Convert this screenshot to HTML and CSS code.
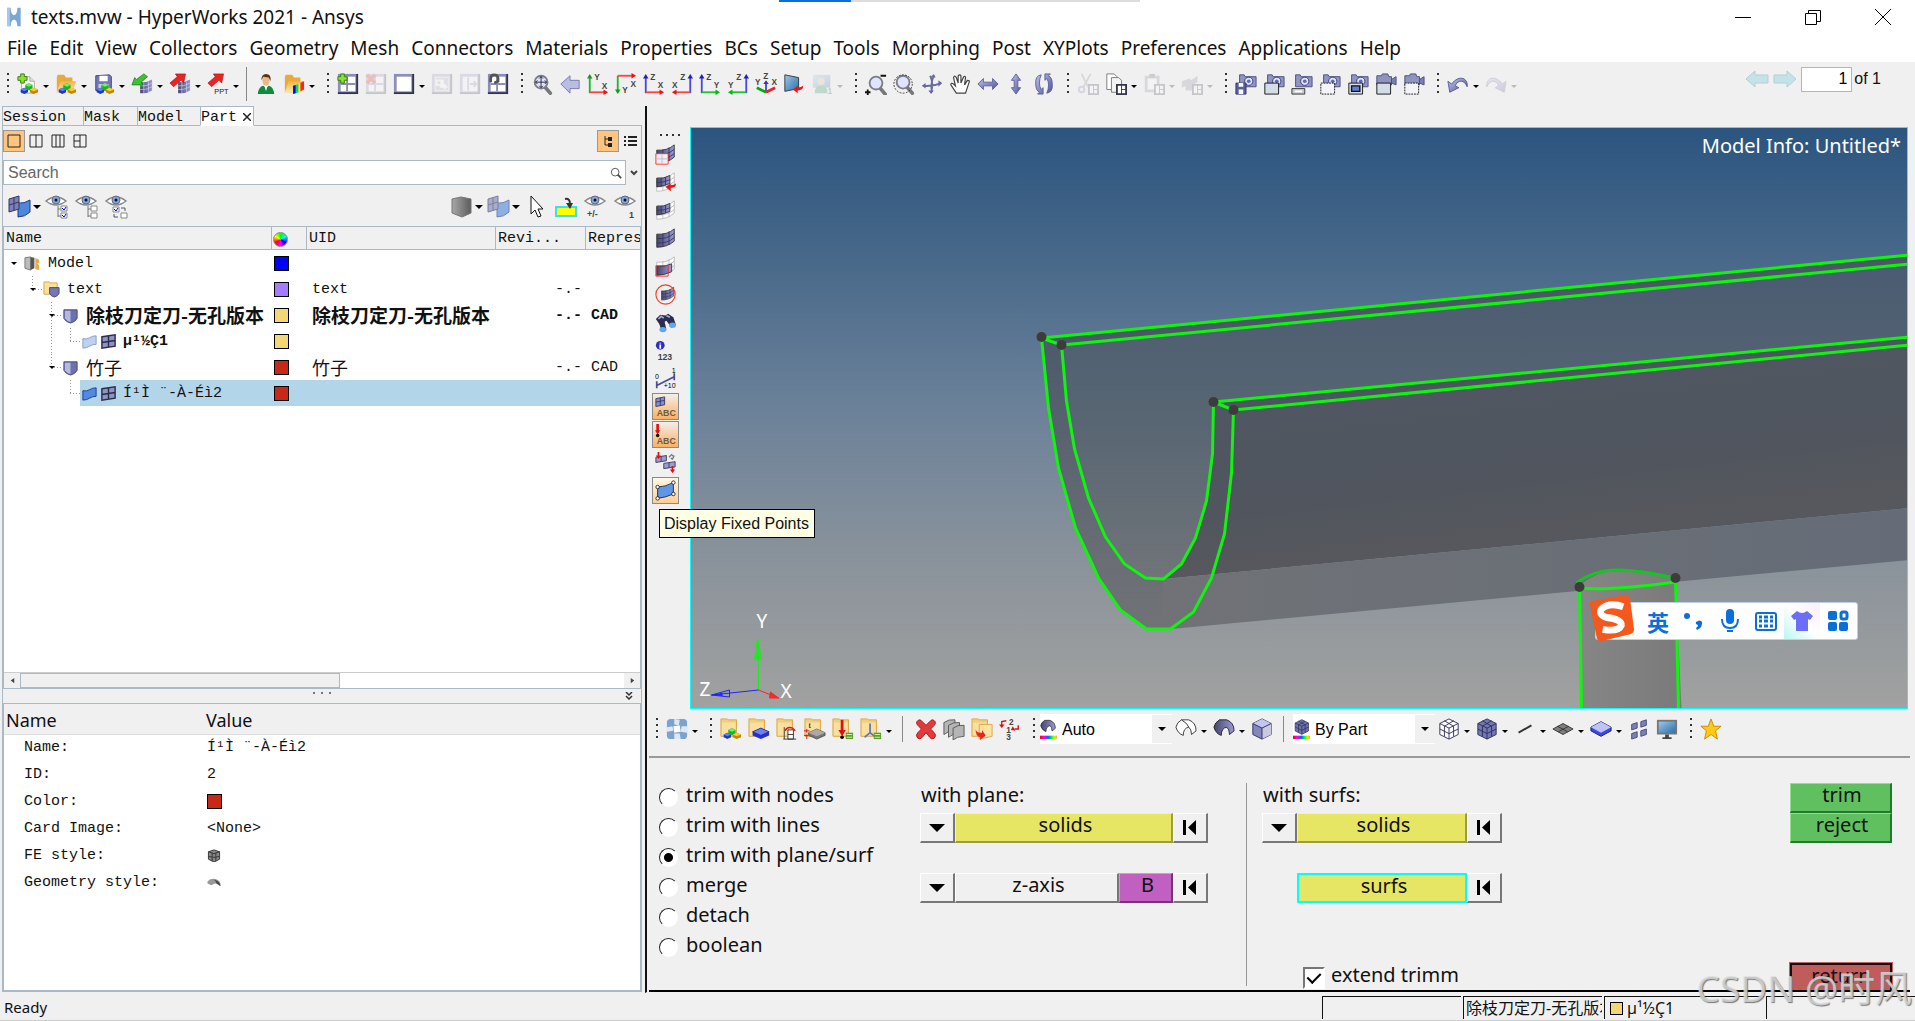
FILE: index.html
```html
<!DOCTYPE html>
<html lang="en">
<head>
    <meta charset="UTF-8">
    <meta name="viewport" content="width=device-width, initial-scale=1.0">
    <title>texts.mvw - HyperWorks 2021 - Ansys</title>
    <link rel="stylesheet" href="styles.css">
</head>
<body>
    <!-- Icon sprite -->
    <svg class="sprite" aria-hidden="true">
        <defs>
            <linearGradient id="blue" x1="0" y1="0" x2="1" y2="1"><stop offset="0" stop-color="#c3c6ee"/><stop offset="1" stop-color="#4d5196"/></linearGradient>
            <linearGradient id="mesh" x1="0" y1="0" x2="1" y2="0"><stop offset="0" stop-color="#45456f"/><stop offset="1" stop-color="#9a9ad6"/></linearGradient>
            <linearGradient id="gold" x1="0" y1="0" x2="0" y2="1"><stop offset="0" stop-color="#f0b548"/><stop offset="1" stop-color="#fbe6a4"/></linearGradient>
            <linearGradient id="grey" x1="0" y1="0" x2="1" y2="0"><stop offset="0" stop-color="#a8a8a8"/><stop offset="1" stop-color="#5c5c5c"/></linearGradient>
            <linearGradient id="rainbow" x1="0" y1="0" x2="1" y2="0"><stop offset="0" stop-color="#f00"/><stop offset=".25" stop-color="#f0f"/><stop offset=".5" stop-color="#06f"/><stop offset=".7" stop-color="#0f3"/><stop offset=".9" stop-color="#fe0"/><stop offset="1" stop-color="#f70"/></linearGradient>
            <linearGradient id="screen" x1="0" y1="0" x2="1" y2="1"><stop offset="0" stop-color="#9cc7ea"/><stop offset="1" stop-color="#2f6fa8"/></linearGradient>

            <symbol id="blocks" viewBox="0 0 24 24">
                <path d="M13 11l4 2v4l-4 2-4-2v-4z" fill="#1eb41e"/><path d="M13 11l4 2-4 2-4-2z" fill="#7de86a"/>
                <path d="M8 16l4 2v3l-4 2-4-2v-3z" fill="#1d37c4"/><path d="M8 16l4 2-4 2-4-2z" fill="#5a80ff"/>
                <path d="M18 16l5 2v3l-5 2-4-2v-3z" fill="#c98500"/><path d="M18 16l5 2-5 2-4-2z" fill="#ffc93c"/>
            </symbol>
            <symbol id="plus" viewBox="0 0 24 24"><path d="M4 1h4v3h3v4H8v3H4V8H1V4h3z" fill="#8ee02c" stroke="#2f7d12"/></symbol>
            <symbol id="folder" viewBox="0 0 24 24"><path d="M2 4l1-2h7l2 3h7v16H2z" fill="#e9a93b"/><path d="M2 21l4-12h17l-4 12z" fill="url(#gold)"/></symbol>
            <symbol id="cfolder" viewBox="0 0 24 24"><path d="M1 5V1h7l1 1h9v18H1z" fill="#f1cf7c" stroke="#dca640"/><path d="M2 5h15v14H2z" fill="#f9dfa0"/></symbol>
            <symbol id="new" viewBox="0 0 24 24"><path d="M5 4h9l5 5v13H5z" fill="#fff" stroke="#aaa"/><path d="M14 4v5h5" fill="#ddd" stroke="#aaa"/><use href="#plus"/><use href="#blocks"/></symbol>
            <symbol id="open" viewBox="0 0 24 24"><use href="#folder"/><use href="#blocks"/></symbol>
            <symbol id="disk" viewBox="0 0 24 24"><path d="M3 3l15-1 2 2v15H3z" fill="#7479b6" stroke="#3d4180"/><path d="M7 3h9v6H7z" fill="#fff"/><path d="M6 12h11v7H6z" fill="#c9cbe8"/></symbol>
            <symbol id="save" viewBox="0 0 24 24"><use href="#disk"/><use href="#blocks"/></symbol>
            <symbol id="smallmesh" viewBox="0 0 24 24"><path d="M10 10q6 1 13-3v12q-6 4-13 3z" fill="url(#mesh)"/><path d="M10 14q6 1 13-3M10 18q6 1 13-3M14 10v12M19 9v12" fill="none" stroke="#d5d5ef" stroke-width=".7"/></symbol>
            <symbol id="import" viewBox="0 0 24 24"><use href="#smallmesh"/><path d="M14 1l4 3-7 6 2 3-12 0 3-8 2 2z" fill="#3cc331" stroke="#1c7a16" stroke-width=".8"/></symbol>
            <symbol id="redup" viewBox="0 0 24 24"><path d="M1 11l8-7-2-3 11 0-2 10-3-3-8 7z" fill="#e82525" stroke="#a81212" stroke-width=".7"/></symbol>
            <symbol id="export" viewBox="0 0 24 24"><use href="#smallmesh"/><use href="#redup"/></symbol>
            <symbol id="ppt" viewBox="0 0 24 24"><use href="#redup"/><text x="8" y="23" font-size="8" font-family="Liberation Sans" fill="#222">PPT</text></symbol>
            <symbol id="user" viewBox="0 0 24 24"><path d="M3 23q1-8 6-9l3 2 3-2q5 1 6 9z" fill="#118a3c"/><path d="M10 13h4l-2 7z" fill="#fff"/><ellipse cx="12" cy="8" rx="4" ry="6" fill="#e9b98c"/><path d="M7 8q0-7 5-7 6 0 5 8l-2-4-6-1z" fill="#5b3211"/></symbol>
            <symbol id="results" viewBox="0 0 24 24"><use href="#folder"/><path d="M11 14l3-1v9l-3 1z" fill="#00f"/><path d="M14 13l3-1v9l-3 1z" fill="#0d6"/><path d="M17 12l2-1v9l-2 1z" fill="#fe0"/><path d="M19 11l4-2v9l-4 2z" fill="#f22"/></symbol>
            <symbol id="page" viewBox="0 0 24 24"><path d="M1 1h22v22H1z" fill="#8b8eb8"/><path d="M22 1v21H1" fill="none" stroke="#33354f" stroke-width="2"/><path d="M4 4h16v16H4z" fill="#fff"/></symbol>
            <symbol id="grid" viewBox="0 0 24 24"><use href="#page"/><path d="M11 4v16M4 12h16" stroke="#8b8eb8" stroke-width="2"/></symbol>
            <symbol id="addpage" viewBox="0 0 24 24"><use href="#grid"/><use href="#plus"/></symbol>
            <symbol id="delpage" viewBox="0 0 24 24"><use href="#grid"/><path d="M2 2l9 9M11 2l-9 9" stroke="#d11" stroke-width="4"/></symbol>
            <symbol id="swap" viewBox="0 0 24 24"><use href="#page"/><path d="M5 5h14v14H5z" fill="#aab"/><path d="M6 8h5v5H6zM13 7v8M10 15h8M15 12v6" fill="none" stroke="#fff" stroke-width="2"/></symbol>
            <symbol id="expand" viewBox="0 0 24 24"><use href="#page"/><path d="M10 5v14M12 12h7M16 9l3 3-3 3" fill="none" stroke="#8b8eb8" stroke-width="2"/></symbol>
            <symbol id="syncpage" viewBox="0 0 24 24"><use href="#grid"/><path d="M4 10V6q0-4 4-4 5 0 4 7l-4 2" fill="none" stroke="#555" stroke-width="3"/></symbol>
            <symbol id="lens" viewBox="0 0 24 24"><path d="M15 15l6 7" stroke="#777" stroke-width="4" stroke-linecap="round"/><circle cx="11" cy="10" r="7" fill="#dfe4ff" stroke="#7c7c84" stroke-width="2"/></symbol>
            <symbol id="fit" viewBox="0 0 24 24"><use href="#lens"/><path d="M11 4v12M5 10h12M9 6l2-2 2 2M9 14l2 2 2-2M7 8l-2 2 2 2M15 8l2 2-2 2" fill="none" stroke="#223"/></symbol>
            <symbol id="back" viewBox="0 0 24 24"><path d="M2 12l10-9v5h10v9H12v5z" fill="#b9bde4" stroke="#7478ab"/></symbol>
            <symbol id="xy" viewBox="0 0 24 24"><path d="M3 4v18" stroke="#1fb52c" stroke-width="2"/><path d="M0 6l3-5 3 5z" fill="#159a22"/><path d="M3 21h17" stroke="#f44" stroke-width="2"/><path d="M18 18l5 3-5 3z" fill="#e11"/><text x="8" y="8" class="ax">Y</text><text x="16" y="17" class="ax">X</text></symbol>
            <symbol id="xy2" viewBox="0 0 24 24"><path d="M3 3v18" stroke="#1fb52c" stroke-width="2"/><path d="M0 18l3 5 3-5z" fill="#159a22"/><path d="M3 3h17" stroke="#f44" stroke-width="2"/><path d="M18 0l5 3-5 3z" fill="#e11"/><text x="8" y="22" class="ax">Y</text><text x="17" y="15" class="ax">X</text></symbol>
            <symbol id="zx" viewBox="0 0 24 24"><path d="M3 4v18" stroke="#4a4ad8" stroke-width="2"/><path d="M0 6l3-5 3 5z" fill="#22b"/><path d="M3 21h17" stroke="#f44" stroke-width="2"/><path d="M18 18l5 3-5 3z" fill="#e11"/><text x="8" y="8" class="ax">Z</text><text x="16" y="16" class="ax">X</text></symbol>
            <symbol id="xz" viewBox="0 0 24 24"><path d="M21 4v18" stroke="#4a4ad8" stroke-width="2"/><path d="M18 6l3-5 3 5z" fill="#22b"/><path d="M4 21h17" stroke="#f44" stroke-width="2"/><path d="M6 18l-5 3 5 3z" fill="#e11"/><text x="10" y="8" class="ax">Z</text><text x="1" y="16" class="ax">X</text></symbol>
            <symbol id="zy" viewBox="0 0 24 24"><path d="M3 4v18" stroke="#4a4ad8" stroke-width="2"/><path d="M0 6l3-5 3 5z" fill="#22b"/><path d="M3 21h17" stroke="#1fc52c" stroke-width="2"/><path d="M18 18l5 3-5 3z" fill="#0b1"/><text x="8" y="8" class="ax">Z</text><text x="16" y="16" class="ax">Y</text></symbol>
            <symbol id="yz" viewBox="0 0 24 24"><path d="M21 4v18" stroke="#4a4ad8" stroke-width="2"/><path d="M18 6l3-5 3 5z" fill="#22b"/><path d="M4 21h17" stroke="#1fc52c" stroke-width="2"/><path d="M6 18l-5 3 5 3z" fill="#0b1"/><text x="10" y="8" class="ax">Z</text><text x="1" y="16" class="ax">Y</text></symbol>
            <symbol id="iso" viewBox="0 0 24 24"><path d="M12 21V11" stroke="#44d" stroke-width="2"/><path d="M9 12l3-4 3 4z" fill="#33c"/><path d="M12 21l-10-5" stroke="#0a1" stroke-width="3"/><path d="M12 21l10-5" stroke="#e22" stroke-width="3"/><text x="9" y="7" class="ax">Z</text><text x="0" y="13" class="ax">Y</text><text x="18" y="13" class="ax">X</text></symbol>
            <symbol id="viewback" viewBox="0 0 24 24"><path d="M2 2l15 3v12L2 20z" fill="url(#screen)" stroke="#334"/><path d="M22 14q0 5-6 5v3l-5-4 5-4v2q4 0 6-2z" fill="#e11"/></symbol>
            <symbol id="userview" viewBox="0 0 24 24"><path d="M2 2h19v14H2z" fill="url(#screen)"/><circle cx="11" cy="9" r="4" fill="#e9b98c"/><path d="M4 22q0-8 7-8t7 8z" fill="#118a3c"/><text x="18" y="23" class="ax">1</text></symbol>
            <symbol id="zoompm" viewBox="0 0 24 24"><g transform="translate(1 1)"><use href="#lens"/></g><path d="M17 3h6M0 21h6M3 18v6" stroke="#111" stroke-width="2"/></symbol>
            <symbol id="zoomarea" viewBox="0 0 24 24"><use href="#lens"/><circle cx="11" cy="12" r="10" fill="none" stroke="#333" stroke-dasharray="2 1.5"/></symbol>
            <symbol id="rotate" viewBox="0 0 24 24"><path d="M10 3q4 9 1 18M2 14q11 1 20-3M14 3q-4 9-2 18" fill="none" stroke="#666a9c" stroke-width="2"/><path d="M19 8l4 3-4 4zM5 11l-4 3 4 3zM10 5l4-4 2 4zM8 19l3 4 3-4z" fill="#666a9c"/></symbol>
            <symbol id="hand" viewBox="0 0 24 24"><path d="M8 22l-6-9q0-3 3-1l2 2-2-9q1-3 3 0l2 6V3q2-2 3 0v8l3-7q2-1 2 1l-1 8 3-5q3 0 2 2l-4 12z" fill="#fff" stroke="#444" stroke-width="1.3"/></symbol>
            <symbol id="lr" viewBox="0 0 24 24"><path d="M1 12l6-6v4h10V6l6 6-6 6v-4H7v4z" fill="url(#blue)" stroke="#5a5f9c"/></symbol>
            <symbol id="ud" viewBox="0 0 24 24"><path d="M12 1l5 7h-3v8h3l-5 7-5-7h3V8H7z" fill="url(#blue)" stroke="#5a5f9c"/></symbol>
            <symbol id="spin" viewBox="0 0 24 24"><path d="M9 2Q2 3 3 12q0 7 4 9l-2 2h6v-7l-2 2Q7 15 7 11q0-5 2-9zM15 22q7-1 6-10 0-7-4-9l2-2h-6v7l2-2q2 3 2 7 0 5-2 9z" fill="url(#blue)" stroke="#5a5f9c"/></symbol>
            <symbol id="minipage" viewBox="0 0 24 24"><path d="M13 13h10v10H13z" fill="#fff" stroke="#33354f" stroke-width="2"/><path d="M18 13v10M18 18h5" stroke="#33354f"/></symbol>
            <symbol id="cut" viewBox="0 0 24 24"><path d="M5 1l7 14M15 1L7 15" stroke="#888" stroke-width="2"/><circle cx="5" cy="18" r="3" fill="none" stroke="#77b" stroke-width="2"/><use href="#minipage"/></symbol>
            <symbol id="copy" viewBox="0 0 24 24"><path d="M2 1h8l3 3v14H2z" fill="#fff" stroke="#777"/><path d="M7 5h8l3 3v13H7z" fill="#f3f3f3" stroke="#777"/><use href="#minipage"/></symbol>
            <symbol id="paste" viewBox="0 0 24 24"><path d="M2 3h16v18H2z" fill="#889"/><path d="M5 6h10v12H5z" fill="#fff"/><path d="M7 1h6v4H7z" fill="#556"/><use href="#minipage"/></symbol>
            <symbol id="pasteview" viewBox="0 0 24 24"><path d="M1 9l8-3 2 2 7-5v7l-7 4-2-2-8 4zM5 13l10-3v9H5z" fill="#889"/><use href="#minipage"/></symbol>
            <symbol id="camera" viewBox="0 0 24 24"><path d="M5 2h5l1 2h12v11H5z" fill="#9195c4" stroke="#484b82"/><circle cx="15" cy="9" r="4.500" fill="#dfe3ff" stroke="#33365f"/><circle cx="15" cy="9" r="2" fill="#5a6ac0"/></symbol>
            <symbol id="video" viewBox="0 0 24 24"><path d="M2 3h5l1-2h6l1 3h3v9H2z" fill="#8f93bd" stroke="#484b82"/><path d="M18 7l5-3v9l-5-2z" fill="#7b7fae" stroke="#484b82"/></symbol>
            <symbol id="box" viewBox="0 0 24 24"><path d="M2 11h15v12H2z" fill="#d3dde8" stroke="#111"/></symbol>
            <symbol id="dash" viewBox="0 0 24 24"><path d="M2 11h15v12H2z" fill="#f4f4f8" stroke="#111" stroke-dasharray="2 1"/></symbol>
            <symbol id="camsave" viewBox="0 0 24 24"><use href="#camera"/><path d="M1 11h11v12H1z" fill="#5a5f9c" stroke="#33365f"/><path d="M4 11h5v4H4zM4 18h5v5H4z" fill="#fff"/></symbol>
            <symbol id="cambox" viewBox="0 0 24 24"><use href="#camera"/><use href="#box"/></symbol>
            <symbol id="camtool" viewBox="0 0 24 24"><use href="#camera"/><path d="M1 17h14v6H1z" fill="#ccc" stroke="#333"/><path d="M4 20h8" stroke="#fff" stroke-width="2"/></symbol>
            <symbol id="camdash" viewBox="0 0 24 24"><use href="#camera"/><use href="#dash"/></symbol>
            <symbol id="camwin" viewBox="0 0 24 24"><use href="#camera"/><use href="#box"/><path d="M5 14h9v6H5z" fill="#5f7ed8" stroke="#111" stroke-width="1.500"/></symbol>
            <symbol id="vidbox" viewBox="0 0 24 24"><use href="#video"/><use href="#box"/></symbol>
            <symbol id="viddash" viewBox="0 0 24 24"><use href="#video"/><use href="#dash"/></symbol>
            <symbol id="undo" viewBox="0 0 24 24"><path d="M1 9l4 3Q11 4 18 6q5 3 4 9-3-7-8-6-4 1-5 5l4 2-10 5z" fill="url(#blue)" stroke="#565b98"/></symbol>
            <symbol id="redo" viewBox="0 0 24 24"><path d="M23 9l-4 3Q13 4 6 6q-5 3-4 9 3-7 8-6 4 1 5 5l-4 2 10 5z" fill="url(#blue)" stroke="#565b98"/></symbol>

            <symbol id="eye" viewBox="0 0 24 24"><path d="M1 6q10-8 20 0-10 8-20 0z" fill="#fff" stroke="#888" stroke-width="1.500"/><circle cx="11" cy="5" r="4" fill="#7fa9dd" stroke="#668"/><circle cx="11" cy="5" r="1.500" fill="#111"/></symbol>
            <symbol id="eyechk" viewBox="0 0 24 24"><use href="#eye"/><path d="M13 11v11M13 14h3M13 21h3" fill="none" stroke="#777"/><path d="M16 11h6v5h-6zM16 18h6v5h-6z" fill="#fff" stroke="#888"/><path d="M17 13l2 2 2-3M17 20l2 2 2-3" fill="none" stroke="#00c"/></symbol>
            <symbol id="eyeunchk" viewBox="0 0 24 24"><use href="#eye"/><path d="M13 11v11M13 14h3M13 21h3" fill="none" stroke="#777"/><path d="M16 11h6v5h-6zM16 18h6v5h-6z" fill="#fff" stroke="#888"/></symbol>
            <symbol id="eyeswap" viewBox="0 0 24 24"><use href="#eye"/><path d="M8 12h6v5H8zM16 18h6v5h-6z" fill="#fff" stroke="#888"/><path d="M9 14l2 2 2-3" fill="none" stroke="#00c"/><path d="M16 13h4v3M9 19v3h4" fill="none" stroke="#555"/></symbol>
            <symbol id="eyepm" viewBox="0 0 24 24"><use href="#eye"/><text x="3" y="22" class="ax">+/-</text></symbol>
            <symbol id="eye1" viewBox="0 0 24 24"><use href="#eye"/><text x="15" y="23" class="ax">1</text></symbol>
            <symbol id="parts" viewBox="0 0 24 24"><path d="M10 8q6 1 12-3v12q-5 5-12 5z" fill="#4d86db" stroke="#1c3f86"/><path d="M1 4l10-3v13L1 17z" fill="#7d80b8" stroke="#33365f"/><path d="M6 3v12M1 10l10-3" stroke="#33365f"/></symbol>
            <symbol id="shade" viewBox="0 0 24 24"><path d="M2 4l9-2 10 2v14l-9 4-10-4z" fill="url(#grey)" stroke="#777"/></symbol>
            <symbol id="cursor" viewBox="0 0 24 24"><path d="M7 1v18l4-4 3 7 3-1-3-7h5z" fill="#fff" stroke="#111"/></symbol>
            <symbol id="highlight" viewBox="0 0 24 24"><path d="M2 12h20v9H2z" fill="#ff0" stroke="#3fdcf2" stroke-width="2"/><path d="M11 4q5-1 5 5" fill="none" stroke="#333" stroke-width="2"/><path d="M12 8h7l-3 6z" fill="#333"/></symbol>
            <symbol id="solid" viewBox="0 0 18 18"><path d="M2 3h14v9q-2 4-7 5-5-1-7-5z" fill="#6d71ad" stroke="#444879"/><path d="M3 4h6v12q-4-1-6-4z" fill="#b5b8e2"/></symbol>
            <symbol id="modelic" viewBox="0 0 18 18"><path d="M1 3l6-1v14l-6-2z" fill="#bbb" stroke="#777"/><path d="M7 2l4 1v11l-4 2z" fill="#555"/><path d="M12 3l4 2v3l-2 1 2 2v5l-4-1z" fill="#eaa83e"/></symbol>
            <symbol id="asm" viewBox="0 0 18 18"><path d="M1 3V1h6l1 1h7v12H1z" fill="#f9dfa0" stroke="#dca640"/><path d="M7 7h10v6q-1 3-5 4-4-1-5-4z" fill="#7377b3" stroke="#444879"/></symbol>
            <symbol id="surf" viewBox="0 0 18 18"><path d="M2 6q4 1 7-1t7-2v9q-4 0-7 2t-7 2z" fill="#4f8ae6" stroke="#1c3f86"/></symbol>
            <symbol id="surfoff" viewBox="0 0 18 18"><path d="M2 6q4 1 7-1t7-2v9q-4 0-7 2t-7 2z" fill="#bcd2f2" stroke="#8a9dc0"/></symbol>
            <symbol id="mesh4" viewBox="0 0 18 18"><path d="M2 4l14-2v12L2 16zM9 3v12M2 10l14-2" fill="#8f92c8" stroke="#2a2c45" stroke-width="1.500"/></symbol>

            <symbol id="m-full" viewBox="0 0 24 24"><path d="M2 7q12 1 20-6v14q-8 7-20 7z" fill="url(#mesh)" stroke="#333"/><path d="M2 12q12 1 20-6M2 17q12 1 20-6M9 6v15M16 4v15" fill="none" stroke="#33355c"/></symbol>
            <symbol id="m-wire" viewBox="0 0 24 24"><path d="M2 7q12 1 20-6v14q-8 7-20 7zM2 12q12 1 20-6M2 17q12 1 20-6M9 6v15M16 4v15" fill="#fff" stroke="#aaa" stroke-width=".8"/></symbol>
            <symbol id="m-part" viewBox="0 0 24 24"><use href="#m-wire"/><path d="M2 7q8 1 15-3v9q-6 3-15 4z" fill="url(#mesh)" stroke="#333"/><path d="M2 12q8 0 15-3M7 7v10M12 6v9" fill="none" stroke="#33355c"/></symbol>
            <symbol id="v1" viewBox="0 0 24 24"><use href="#m-full"/><path d="M1 11h14v12H1z" fill="#fff" fill-opacity=".9" stroke="#f22"/><path d="M2 17h12M8 12v11" stroke="#bbb"/></symbol>
            <symbol id="v2" viewBox="0 0 24 24"><use href="#m-part"/><path d="M24 13q0 5-6 5v4l-6-5 6-4v2q4 0 6-2z" fill="#e11"/></symbol>
            <symbol id="v5" viewBox="0 0 24 24"><use href="#m-wire"/><path d="M2 12q8 1 17-3v9q-9 4-17 4z" fill="url(#mesh)" stroke="#333"/><path d="M1 11h14v12H1z" fill="none" stroke="#f22"/></symbol>
            <symbol id="v6" viewBox="0 0 24 24"><g transform="translate(6 3) scale(.7)"><use href="#m-full"/></g><circle cx="12" cy="12" r="11" fill="none" stroke="#f43a2a" stroke-width="1.300"/></symbol>
            <symbol id="binoc" viewBox="0 0 24 24"><path d="M1 8l5-5 6 1 3-2 6 4 3 9-5 3-6-8-2 1 2 9-5 3-3-9z" fill="#2b2d50"/><path d="M4 8l3-3 3 2M13 4l4 2" stroke="#a7a9da" stroke-width="2" fill="none"/><ellipse cx="9" cy="20" rx="4" ry="3" fill="#5aa9f2"/><ellipse cx="20" cy="15" rx="4" ry="3" fill="#5aa9f2"/></symbol>
            <symbol id="info" viewBox="0 0 24 24"><circle cx="6" cy="6" r="5" fill="#2a2fc0"/><path d="M6 3v1M6 5v5" stroke="#fff" stroke-width="2"/><text x="3" y="23" font-size="10" font-weight="bold" font-family="Liberation Sans" fill="#444">123</text></symbol>
            <symbol id="dist" viewBox="0 0 24 24"><path d="M2 15v8M22 6v8M2 20l20-10" stroke="#4a4d90" stroke-width="2"/><text x="0" y="13" font-size="8" font-family="Liberation Sans">0</text><text x="19" y="6" font-size="8" font-family="Liberation Sans">1</text><text x="10" y="23" font-size="8" font-family="Liberation Sans">+10'</text></symbol>
            <symbol id="abc1" viewBox="0 0 24 24"><path d="M1 3l10-2v9l-10 2zM6 2v9M1 7l10-2" fill="#8a8dd0" stroke="#33365f"/><text x="2" y="23" class="abc">ABC</text></symbol>
            <symbol id="abc2" viewBox="0 0 24 24"><path d="M3 0v9" stroke="#e01010" stroke-width="3"/><path d="M0 7h6l-3 5z" fill="#e01010"/><circle cx="3" cy="13" r="2" fill="#111"/><text x="2" y="23" class="abc">ABC</text></symbol>
            <symbol id="norm" viewBox="0 0 24 24"><path d="M1 6l12-2v6L1 12zM10 13l13-2v6l-13 2zM7 5v6M16 12v6" fill="#9a9dd0" stroke="#33365f"/><path d="M4 0v6M20 16v6" stroke="#e01010" stroke-width="2"/><path d="M1 4h6L4 8zM17 20h6l-3 4z" fill="#e01010"/><path d="M16 6l3-3 2 2M22 4l-2 4-2-1" fill="none" stroke="#777" stroke-width="1.500"/></symbol>
            <symbol id="fixed" viewBox="0 0 24 24"><path d="M3 8q8 0 18-5v13q-9 4-18 5z" fill="#5e96ea" stroke="#223"/><g fill="#fff" stroke="#223"><circle cx="3" cy="8" r="2"/><circle cx="21" cy="3" r="2"/><circle cx="21" cy="16" r="2"/><circle cx="3" cy="21" r="2"/></g></symbol>

            <symbol id="panelset" viewBox="0 0 24 24"><rect x="1" y="1" width="22" height="22" rx="4" fill="#7ba3cb"/><path d="M1 10l6-1 1 5-7 1zM9 1l6 1-1 6-5-1zM23 9l-6 0-1 6 7 1zM9 17l6 0 1 6H9z" fill="#dce8f5"/><path d="M8 9l7-1 1 7-7 1z" fill="#fff"/></symbol>
            <symbol id="slab" viewBox="0 0 24 24"><path d="M14 11l9 4v4l-9 4-9-4v-4z" fill="#2730cf"/><path d="M14 11l9 4-9 4-9-4z" fill="#6f7dff" stroke="#111a77" stroke-width=".7"/></symbol>
            <symbol id="fcomp" viewBox="0 0 24 24"><use href="#cfolder"/><use href="#blocks"/></symbol>
            <symbol id="fmat" viewBox="0 0 24 24"><use href="#cfolder"/><use href="#slab"/></symbol>
            <symbol id="ftab" viewBox="0 0 24 24"><use href="#cfolder"/><path d="M9 10v13M8 23h14M13 13h6v10h-6zM13 18h6" fill="#fff" stroke="#333"/><path d="M10 14q2-5 8-3l3 3" fill="none" stroke="#e11" stroke-width="1.500"/></symbol>
            <symbol id="fprop" viewBox="0 0 24 24"><use href="#cfolder"/><path d="M14 12l9 4v3l-9 4-9-4v-3z" fill="#777" stroke="#333" stroke-width=".7"/><path d="M14 12l9 4-9 4-9-4z" fill="#aaa"/><text x="5" y="11" font-size="10" font-family="Liberation Serif">t</text><path d="M3 12v4M3 18v5M0 14h6M0 19h5" stroke="#c11"/></symbol>
            <symbol id="fload" viewBox="0 0 24 24"><use href="#cfolder"/><path d="M11 2v14" stroke="#e01010" stroke-width="3"/><path d="M7 13h8l-4 7z" fill="#e01010"/><circle cx="11" cy="21" r="2"/><path d="M15 16h8v7h-8z" fill="#5aa02c"/><path d="M16 18h6M16 21h6" stroke="#d9f5c0"/></symbol>
            <symbol id="fsys" viewBox="0 0 24 24"><use href="#cfolder"/><path d="M11 6v10l-6 5M11 16l5 4" fill="none" stroke="#667bb8" stroke-width="2"/><path d="M15 16h8v7h-8z" fill="#5aa02c"/><path d="M16 18h6M16 21h6" stroke="#d9f5c0"/></symbol>
            <symbol id="delete" viewBox="0 0 24 24"><path d="M2 4q3-4 6 0l4 4 4-4q3-4 6 0 1 2-1 4l-4 4 4 4q3 3 0 6-3 2-5-1l-4-5-4 5q-3 3-5 1-3-3 0-6l4-4-4-4q-2-2-1-4z" fill="#e43a3a" stroke="#a01818"/></symbol>
            <symbol id="layers" viewBox="0 0 24 24"><g fill="#b5b5b5" stroke="#555"><path d="M1 5q5-4 12-3v12q-8 0-12 4z"/><path d="M6 8q5-4 12-3v12q-8 0-12 4z"/><path d="M11 11q5-4 12-3v12q-8 0-12 4z"/></g></symbol>
            <symbol id="move" viewBox="0 0 24 24"><use href="#cfolder"/><path d="M9 7h14v13L9 23z" fill="#fbe3a2" stroke="#dca640"/><path d="M5 12q1 5 7 4v-3l4 6-6 5v-3q-5-1-5-9z" fill="#e22"/></symbol>
            <symbol id="renum" viewBox="0 0 24 24"><text x="11" y="8" class="ax">2</text><text x="8" y="16" class="ax">1</text><text x="8" y="24" class="ax">3</text><path d="M8 3L3 4v4M17 12h4V8" fill="none" stroke="#d11" stroke-width="1.500"/><path d="M0 7h6l-3 4zM15 9l-2 4 5 1z" fill="#d11"/></symbol>
            <symbol id="sheet" viewBox="0 0 24 24"><path d="M1 10q1-5 6-8h8q8 3 8 12l-5 4q0-6-3-8-6 1-6 9-6-2-8-9zM15 10q-1-4-8-8" fill="#fff" stroke="#333"/></symbol>
            <symbol id="sheetfill" viewBox="0 0 24 24"><path d="M1 10q1-5 6-8h8q8 3 8 12l-5 4q0-6-3-8-6 1-6 9-6-2-8-9z" fill="url(#mesh)" stroke="#222"/></symbol>
            <symbol id="cube" viewBox="0 0 24 24"><path d="M12 1l10 5v12l-10 5-10-5V6z" fill="#8487bd" stroke="#2c2e55"/><path d="M12 1l10 5-10 5L2 6z" fill="#c3c6f3"/><path d="M12 23V11l10-5v12z" fill="#c9cadf"/><path d="M12 11v12M2 6l10 5 10-5" fill="none" stroke="#2c2e55"/></symbol>
            <symbol id="cubegrid" viewBox="0 0 24 24"><path d="M12 1l10 5v12l-10 5-10-5V6z" stroke="#2c2e55"/><path d="M12 11v12M2 6l10 5 10-5M2 12l10 5 10-5M7 3l10 6v11M17 3L7 9v11" fill="none" stroke="#2c2e55"/></symbol>
            <symbol id="shadeby" viewBox="0 0 24 24"><g transform="scale(.8)"><use href="#sheetfill"/></g><path d="M0 20h20v4H0z" fill="url(#rainbow)"/></symbol>
            <symbol id="cubeby" viewBox="0 0 24 24"><g transform="translate(1 0) scale(.8)" fill="#6d71ad"><use href="#cubegrid"/></g><path d="M0 20h20v4H0z" fill="url(#rainbow)"/></symbol>
            <symbol id="line" viewBox="0 0 24 24"><path d="M5 16l14-8" stroke="#333" stroke-width="2"/></symbol>
            <symbol id="flat" viewBox="0 0 24 24"><path d="M12 6l11 6-11 6-11-6zM6 9l11 6M18 9L7 15" fill="#7e7e7e" stroke="#333"/></symbol>
            <symbol id="slab2" viewBox="0 0 24 24"><path d="M12 4l11 6v4l-11 6-11-6v-4z" fill="#3c49e0" stroke="#111a77"/><path d="M12 4l11 6-11 6-11-6z" fill="#bcc3ff"/></symbol>
            <symbol id="shrink" viewBox="0 0 24 24"><path d="M4 7l6-2v6l-6 2zM14 4l6-2v6l-6 2zM4 17l6-2v6l-6 2zM14 14l6-2v6l-6 2z" fill="#7b7fba" stroke="#44477c"/></symbol>
            <symbol id="monitor" viewBox="0 0 24 24"><path d="M1 2h22v16H1z" fill="#777"/><path d="M3 4h18v12H3z" fill="url(#screen)"/><path d="M10 18h4v3h3v2H7v-2h3z" fill="#444"/></symbol>
            <symbol id="star" viewBox="0 0 24 24"><path d="M12 1l3 8h8l-6 5 2 9-7-5-7 5 2-9-6-5h8z" fill="#ffc915" stroke="#c78a00"/></symbol>

            <symbol id="down" viewBox="0 0 10 6"><path d="M1 1h8L5 5z"/></symbol>
        </defs>
    </svg>

    <div class="app">
        <header class="titlebar">
            <svg class="logo" viewBox="0 0 18 24"><path d="M1 1h4q0 8 4 9 4-1 4-9h4v22h-4q0-7-4-8-4 1-4 8H1z" fill="#7ba7d6"/><path d="M1 1h3v22H1z" fill="#a9c8e8"/></svg>
            <h1 class="title">texts.mvw - HyperWorks 2021 - Ansys</h1>
            <div class="loadbar"><span class="loadbar-fill"></span></div>
            <div class="window-buttons">
                <button type="button" aria-label="Minimize"><svg viewBox="0 0 16 16"><path d="M0 8.500h16" stroke="#000"/></svg></button>
                <button type="button" aria-label="Restore"><svg viewBox="0 0 16 16"><path d="M.5 4.500h11v11H.5zM3.500 4V1.500h12v11H12" fill="none" stroke="#000"/></svg></button>
                <button type="button" aria-label="Close"><svg viewBox="0 0 16 16"><path d="M0 0l16 16M16 0L0 16" stroke="#000"/></svg></button>
            </div>
        </header>

        <nav class="menubar">
            <a href="#">File</a><a href="#">Edit</a><a href="#">View</a><a href="#">Collectors</a><a href="#">Geometry</a><a href="#">Mesh</a><a href="#">Connectors</a><a href="#">Materials</a><a href="#">Properties</a><a href="#">BCs</a><a href="#">Setup</a><a href="#">Tools</a><a href="#">Morphing</a><a href="#">Post</a><a href="#">XYPlots</a><a href="#">Preferences</a><a href="#">Applications</a><a href="#">Help</a>
        </nav>

        <div class="toolbar main-toolbar">
            <span class="grip"></span>
            <button type="button" class="tool drop" aria-label="New"><svg><use href="#new"/></svg></button>
            <button type="button" class="tool drop" aria-label="Open"><svg><use href="#open"/></svg></button>
            <button type="button" class="tool drop" aria-label="Save"><svg><use href="#save"/></svg></button>
            <button type="button" class="tool drop" aria-label="Import"><svg><use href="#import"/></svg></button>
            <button type="button" class="tool drop" aria-label="Export"><svg><use href="#export"/></svg></button>
            <button type="button" class="tool drop" aria-label="Export to PPT"><svg><use href="#ppt"/></svg></button>
            <span class="sep"></span>
            <button type="button" class="tool" aria-label="User profiles"><svg><use href="#user"/></svg></button>
            <button type="button" class="tool drop" aria-label="Load results"><svg><use href="#results"/></svg></button>
            <span class="grip"></span>
            <button type="button" class="tool" aria-label="Add page"><svg><use href="#addpage"/></svg></button>
            <button type="button" class="tool" aria-label="Delete page" disabled><svg><use href="#delpage"/></svg></button>
            <button type="button" class="tool drop" aria-label="Page layout"><svg><use href="#page"/></svg></button>
            <button type="button" class="tool" aria-label="Swap windows" disabled><svg><use href="#swap"/></svg></button>
            <button type="button" class="tool" aria-label="Expand window" disabled><svg><use href="#expand"/></svg></button>
            <button type="button" class="tool" aria-label="Synchronize"><svg><use href="#syncpage"/></svg></button>
            <span class="grip"></span>
            <button type="button" class="tool" aria-label="Fit"><svg><use href="#fit"/></svg></button>
            <button type="button" class="tool" aria-label="Previous view"><svg><use href="#back"/></svg></button>
            <button type="button" class="tool" aria-label="XY top"><svg><use href="#xy"/></svg></button>
            <button type="button" class="tool" aria-label="XY bottom"><svg><use href="#xy2"/></svg></button>
            <button type="button" class="tool" aria-label="XZ front"><svg><use href="#zx"/></svg></button>
            <button type="button" class="tool" aria-label="XZ rear"><svg><use href="#xz"/></svg></button>
            <button type="button" class="tool" aria-label="YZ left"><svg><use href="#zy"/></svg></button>
            <button type="button" class="tool" aria-label="YZ right"><svg><use href="#yz"/></svg></button>
            <button type="button" class="tool" aria-label="Isometric"><svg><use href="#iso"/></svg></button>
            <button type="button" class="tool" aria-label="Reverse view"><svg><use href="#viewback"/></svg></button>
            <button type="button" class="tool drop" aria-label="User view" disabled><svg><use href="#userview"/></svg></button>
            <span class="grip"></span>
            <button type="button" class="tool" aria-label="Zoom in and out"><svg><use href="#zoompm"/></svg></button>
            <button type="button" class="tool" aria-label="Zoom area"><svg><use href="#zoomarea"/></svg></button>
            <button type="button" class="tool" aria-label="Rotate"><svg><use href="#rotate"/></svg></button>
            <button type="button" class="tool" aria-label="Pan"><svg><use href="#hand"/></svg></button>
            <button type="button" class="tool" aria-label="Rotate left and right"><svg><use href="#lr"/></svg></button>
            <button type="button" class="tool" aria-label="Rotate up and down"><svg><use href="#ud"/></svg></button>
            <button type="button" class="tool" aria-label="Spin"><svg><use href="#spin"/></svg></button>
            <span class="grip"></span>
            <button type="button" class="tool" aria-label="Cut" disabled><svg><use href="#cut"/></svg></button>
            <button type="button" class="tool drop" aria-label="Copy"><svg><use href="#copy"/></svg></button>
            <button type="button" class="tool drop" aria-label="Paste" disabled><svg><use href="#paste"/></svg></button>
            <button type="button" class="tool drop" aria-label="Paste view" disabled><svg><use href="#pasteview"/></svg></button>
            <span class="grip"></span>
            <button type="button" class="tool" aria-label="Save image"><svg><use href="#camsave"/></svg></button>
            <button type="button" class="tool" aria-label="Capture graphics"><svg><use href="#cambox"/></svg></button>
            <button type="button" class="tool" aria-label="Capture panel"><svg><use href="#camtool"/></svg></button>
            <button type="button" class="tool" aria-label="Capture area"><svg><use href="#camdash"/></svg></button>
            <button type="button" class="tool" aria-label="Capture window"><svg><use href="#camwin"/></svg></button>
            <button type="button" class="tool" aria-label="Record graphics"><svg><use href="#vidbox"/></svg></button>
            <button type="button" class="tool" aria-label="Record area"><svg><use href="#viddash"/></svg></button>
            <span class="grip"></span>
            <button type="button" class="tool drop" aria-label="Undo"><svg><use href="#undo"/></svg></button>
            <button type="button" class="tool drop" aria-label="Redo" disabled><svg><use href="#redo"/></svg></button>

            <div class="pager">
                <button type="button" aria-label="Previous page" disabled><svg viewBox="0 0 24 18"><path d="M1 9l9-8v4h13v8H10v4z" fill="#a6dbe6" stroke="#8fb9c4"/></svg></button>
                <button type="button" aria-label="Next page" disabled><svg viewBox="0 0 24 18"><path d="M23 9l-9-8v4H1v8h13v4z" fill="#a6dbe6" stroke="#8fb9c4"/></svg></button>
                <input type="text" id="page-no" value="1"><label for="page-no">of 1</label>
            </div>
        </div>

        <main class="workspace">
            <aside class="browser">
                <div class="tabs">
                    <button type="button" class="tab tab-session">Session</button>
                    <button type="button" class="tab tab-mask">Mask</button>
                    <button type="button" class="tab tab-model">Model</button>
                    <button type="button" class="tab active">Part<svg viewBox="0 0 8 8"><path d="M0 0l8 8M8 0L0 8" stroke="#222" stroke-width="1.500"/></svg></button>
                    <span class="tab-rest"></span>
                </div>

                <div class="browser-body">
                    <div class="view-row">
                        <button type="button" class="mini on" aria-label="One pane"><svg viewBox="0 0 14 14"><path d="M1 1h12v12H1z"/></svg></button>
                        <button type="button" class="mini" aria-label="Two panes"><svg viewBox="0 0 14 14"><path d="M1 1h12v12H1zM7 1v12"/></svg></button>
                        <button type="button" class="mini" aria-label="Three panes"><svg viewBox="0 0 14 14"><path d="M1 1h12v12H1zM5 1v12M9 1v12"/></svg></button>
                        <button type="button" class="mini" aria-label="Split panes"><svg viewBox="0 0 14 14"><path d="M1 1h12v12H1zM7 1v12M1 7h6"/></svg></button>
                        <span class="spacer"></span>
                        <button type="button" class="mini on" aria-label="Tree"><svg viewBox="0 0 14 14"><path d="M4 2v9h4M4 5h4"/><path d="M8 4h2v2H8zM8 10h2v2H8z" stroke-width="2"/></svg></button>
                        <button type="button" class="mini" aria-label="List"><svg viewBox="0 0 14 14"><path d="M1 3h2M5 3h9M1 7h2M5 7h9M1 11h2M5 11h9" stroke-width="2"/></svg></button>
                    </div>

                    <div class="search-row">
                        <div class="search">
                            <input type="text" placeholder="Search" aria-label="Search">
                            <svg viewBox="0 0 14 14"><circle cx="6" cy="6" r="4.500" fill="none" stroke="#444"/><path d="M9 9l4 4" stroke="#444" stroke-width="2"/></svg>
                        </div>
                        <button type="button" class="more" aria-label="Search options"><svg viewBox="0 0 8 8"><path d="M1 2l3 3 3-3" fill="none" stroke="#444" stroke-width="2"/></svg></button>
                    </div>

                    <div class="part-tools">
                        <button type="button" class="tool drop" aria-label="Entity filter"><svg><use href="#parts"/></svg></button>
                        <button type="button" class="tool" aria-label="Show all"><svg><use href="#eyechk"/></svg></button>
                        <button type="button" class="tool" aria-label="Hide all"><svg><use href="#eyeunchk"/></svg></button>
                        <button type="button" class="tool" aria-label="Reverse display"><svg><use href="#eyeswap"/></svg></button>
                        <span class="spacer"></span>
                        <button type="button" class="tool drop" aria-label="Shading"><svg><use href="#shade"/></svg></button>
                        <button type="button" class="tool drop faded" aria-label="Display filter"><svg><use href="#parts"/></svg></button>
                        <button type="button" class="tool" aria-label="Selector"><svg><use href="#cursor"/></svg></button>
                        <button type="button" class="tool" aria-label="Highlight"><svg><use href="#highlight"/></svg></button>
                        <button type="button" class="tool" aria-label="Show or hide"><svg><use href="#eyepm"/></svg></button>
                        <button type="button" class="tool" aria-label="Isolate"><svg><use href="#eye1"/></svg></button>
                    </div>

                    <div class="tree-box">
                        <table class="tree">
                            <colgroup><col class="c-name"><col class="c-color"><col class="c-uid"><col class="c-rev"><col class="c-rep"></colgroup>
                            <thead>
                                <tr><th>Name</th><th><span class="wheel"></span></th><th>UID</th><th>Revi...</th><th>Repres</th></tr>
                            </thead>
                            <tbody>
                                <tr>
                                    <td><div class="node"><span class="slot open"></span><svg class="ic"><use href="#modelic"/></svg><span class="name">Model</span></div></td>
                                    <td><i class="swatch blue"></i></td><td></td><td></td><td></td>
                                </tr>
                                <tr>
                                    <td><div class="node"><span class="slot"></span><span class="slot elbow open"></span><svg class="ic"><use href="#asm"/></svg><span class="name">text</span></div></td>
                                    <td><i class="swatch violet"></i></td><td>text</td><td class="rev">-.-</td><td></td>
                                </tr>
                                <tr class="current">
                                    <td><div class="node"><span class="slot"></span><span class="slot"></span><span class="slot tee open"></span><svg class="ic"><use href="#solid"/></svg><span class="name han">除枝刀定刀-无孔版本</span></div></td>
                                    <td><i class="swatch yellow"></i></td><td class="han">除枝刀定刀-无孔版本</td><td class="rev">-.-</td><td>CAD</td>
                                </tr>
                                <tr class="current">
                                    <td><div class="node"><span class="slot"></span><span class="slot"></span><span class="slot pass"></span><span class="slot elbow"></span><svg class="ic"><use href="#surfoff"/></svg><svg class="ic"><use href="#mesh4"/></svg><span class="name leaf">µ¹½Ç1</span></div></td>
                                    <td><i class="swatch yellow"></i></td><td></td><td></td><td></td>
                                </tr>
                                <tr>
                                    <td><div class="node"><span class="slot"></span><span class="slot"></span><span class="slot elbow open"></span><svg class="ic"><use href="#solid"/></svg><span class="name han">竹子</span></div></td>
                                    <td><i class="swatch red"></i></td><td class="han">竹子</td><td class="rev">-.-</td><td>CAD</td>
                                </tr>
                                <tr class="selected">
                                    <td><div class="node"><span class="slot"></span><span class="slot"></span><span class="slot"></span><span class="slot elbow"></span><svg class="ic"><use href="#surf"/></svg><svg class="ic"><use href="#mesh4"/></svg><span class="name leaf">Í¹Ì ¨-À-Éì2</span></div></td>
                                    <td><i class="swatch red"></i></td><td></td><td></td><td></td>
                                </tr>
                            </tbody>
                        </table>
                        <div class="hscroll">
                            <button type="button" aria-label="Scroll left"><svg viewBox="0 0 8 8"><path d="M6 1L2 4l4 3z" fill="#444"/></svg></button>
                            <div class="track"><span class="thumb"></span></div>
                            <button type="button" aria-label="Scroll right"><svg viewBox="0 0 8 8"><path d="M2 1l4 3-4 3z" fill="#444"/></svg></button>
                        </div>
                    </div>

                    <div class="splitter"><i></i><i></i><i></i><svg viewBox="0 0 8 8"><path d="M1 0l3 3 3-3M1 4l3 3 3-3" fill="none" stroke="#333" stroke-width="1.500"/></svg></div>

                    <div class="props-box">
                        <table class="props">
                            <thead><tr><th>Name</th><th>Value</th></tr></thead>
                            <tbody>
                                <tr><td>Name:</td><td>Í¹Ì ¨-À-Éì2</td></tr>
                                <tr><td>ID:</td><td>2</td></tr>
                                <tr><td>Color:</td><td><i class="swatch red"></i></td></tr>
                                <tr><td>Card Image:</td><td>&lt;None&gt;</td></tr>
                                <tr><td>FE style:</td><td><svg class="style-ic" viewBox="0 0 14 14"><path d="M1 3l6-2 6 2v8l-6 3-6-3z" fill="#888" stroke="#333"/><path d="M1 3l6 2 6-2M5 4v9M9 4v9M1 8l6 1 6-1" fill="none" stroke="#333"/></svg></td></tr>
                                <tr><td>Geometry style:</td><td><svg class="style-ic" viewBox="0 0 14 14"><path d="M0 6q2-3 6-3 6 0 8 5v3l-3-2-3-1-4 2-4-2z" fill="#999"/><path d="M7 4q6 1 7 7l-4-3q-1-2-3-4z" fill="#444"/></svg></td></tr>
                            </tbody>
                        </table>
                    </div>
                </div>
            </aside>

            <section class="stage">
                <div class="stage-top">
                    <div class="side-tools">
                        <span class="grip-h"></span>
                        <button type="button" aria-label="Mask"><svg><use href="#v1"/></svg></button>
                        <button type="button" aria-label="Reverse"><svg><use href="#v2"/></svg></button>
                        <button type="button" aria-label="Unmask adjacent"><svg><use href="#m-part"/></svg></button>
                        <button type="button" aria-label="Unmask all"><svg><use href="#m-full"/></svg></button>
                        <button type="button" aria-label="Mask not shown"><svg><use href="#v5"/></svg></button>
                        <button type="button" aria-label="Spherical clipping"><svg><use href="#v6"/></svg></button>
                        <button type="button" aria-label="Find"><svg><use href="#binoc"/></svg></button>
                        <button type="button" aria-label="Numbers"><svg><use href="#info"/></svg></button>
                        <button type="button" aria-label="Distance"><svg><use href="#dist"/></svg></button>
                        <button type="button" class="pressed" aria-label="Element handles"><svg><use href="#abc1"/></svg></button>
                        <button type="button" class="pressed" aria-label="Load handles"><svg><use href="#abc2"/></svg></button>
                        <button type="button" aria-label="Normals"><svg><use href="#norm"/></svg></button>
                        <div class="tip-anchor">
                            <button type="button" class="pressed hover" aria-describedby="tip" aria-label="Display Fixed Points"><svg><use href="#fixed"/></svg></button>
                            <div class="tooltip" id="tip" role="tooltip">Display Fixed Points</div>
                        </div>
                    </div>

                    <div class="viewport">
                        <svg class="scene" viewBox="0 0 1217 580" preserveAspectRatio="xMidYMid slice">
                            <defs>
                                <linearGradient id="inside" gradientUnits="userSpaceOnUse" x1="0" y1="140" x2="0" y2="450"><stop offset="0" stop-color="#4a5c71"/><stop offset=".5" stop-color="#586673"/><stop offset="1" stop-color="#707478"/></linearGradient>
                                <linearGradient id="outside" gradientUnits="userSpaceOnUse" x1="760" y1="250" x2="780" y2="420"><stop offset="0" stop-color="#4f5762"/><stop offset=".6" stop-color="#50555e"/><stop offset="1" stop-color="#57585d"/></linearGradient>
                                <linearGradient id="under" gradientUnits="userSpaceOnUse" x1="480" y1="0" x2="1217" y2="0"><stop offset="0" stop-color="#707276"/><stop offset="1" stop-color="#656c77"/></linearGradient>
                                <linearGradient id="face" gradientUnits="userSpaceOnUse" x1="0" y1="210" x2="0" y2="501"><stop offset="0" stop-color="#4c5a6b"/><stop offset=".8" stop-color="#6b6f75"/><stop offset="1" stop-color="#707276"/></linearGradient>
                                <linearGradient id="post" x1="0" y1="0" x2="1" y2="0"><stop offset="0" stop-color="#868686"/><stop offset="1" stop-color="#7a7a7b"/></linearGradient>
                            </defs>
                            <!-- half pipe -->
                            <path d="M371 217L1219 136V209L523 274L522 326L516 373L505 410L491 436L473 451H455L434 436L415 409L398 370L384 321L376 273z" fill="url(#inside)"/>
                            <path d="M351 210L358 280L368 340L385 400L408 450L430 482L456 501H481L476 450L455 450L434 436L415 409L398 370L384 321L376 273L371 217z" fill="url(#face)"/>
                            <path d="M351 210L1219 127V136L371 217z" fill="#4b5766"/>
                            <path d="M523 274L1219 209V217L543 282z" fill="#4c545f"/>
                            <path d="M543 282L1219 217V380L473 451L491 436L505 410L516 373L522 326L523 274z" fill="url(#outside)"/>
                            <path d="M473 451L1219 380V432L481 501H470z" fill="url(#under)"/>
                            <!-- post -->
                            <path d="M888 459Q905 442 930 443T985 451L991 580H891z" fill="url(#post)"/>
                            <g class="edges">
                                <path d="M351 210L1219 127M371 217L1219 136M523 274L1219 209M543 282L1219 217"/>
                                <path d="M371 217L351 210L353 230L358 280L368 340L385 400L408 450L430 482L456 501H480L503 484L521 450L534 406L541 345L543 282L523 274"/>
                                <path d="M371 217L376 273L384 321L398 370L415 409L434 436L455 450L473 451L491 436L505 410L516 373L522 326L523 274"/>
                                <path d="M889 460L891 580M985 452L988 580M889 460Q920 463 985 454"/>
                                <path d="M886 455Q905 441 930 442T984 450" stroke="#17c425"/>
                            </g>
                            <g fill="#3d3b3b"><circle cx="351" cy="209" r="5"/><circle cx="371" cy="217" r="5"/><circle cx="523" cy="274" r="5"/><circle cx="543" cy="282" r="5"/><circle cx="889" cy="459" r="5"/><circle cx="985" cy="450" r="5"/></g>
                            <!-- axis triad -->
                            <path d="M68 562V512M64 531l3-20 4 20z" fill="none" stroke="#1ee81e"/><path d="M65 531l2-16 3 16z" fill="#1ee81e"/>
                            <path d="M68 562L21 567M39 562l-18 5 18 2z" fill="none" stroke="#22f"/><path d="M32 565l-11 2 11 1z" fill="#22f"/>
                            <path d="M68 562L88 570M80 564l8 6-9 0z" fill="#e33" stroke="#f22"/>
                            <g class="axis-label"><text x="66" y="500">Y</text><text x="9" y="568">Z</text><text x="90" y="570">X</text></g>
                        </svg>
                        <div class="model-info">Model Info: Untitled*</div>

                        <div class="ime">
                            <svg class="ime-logo" viewBox="0 0 48 48"><path d="M2 10Q1 7 5 6L38 0q4 0 5 4l4 31q0 4-4 5L14 47q-4 1-5-3z" fill="#f4581c"/><path d="M36 12Q22 7 14 14q-4 6 5 9 16 2 15 8-3 7-19 4" fill="none" stroke="#fff" stroke-width="7"/></svg>
                            <button type="button" class="ime-lang">英</button>
                            <button type="button" aria-label="Punctuation"><svg viewBox="0 0 24 24"><circle cx="5" cy="7" r="3"/><path d="M14 13q4-3 6 0 1 5-5 8l-1-2q2-1 2-3-3-1-2-3z"/></svg></button>
                            <button type="button" aria-label="Voice"><svg viewBox="0 0 24 24"><rect x="8" y="0" width="8" height="15" rx="4"/><path d="M4 10q0 9 8 9t8-9" fill="none" stroke="#0a6fd8" stroke-width="2"/><path d="M9 21h6v2H9z"/></svg></button>
                            <button type="button" aria-label="Keyboard"><svg viewBox="0 0 24 24"><rect x="2" y="4" width="20" height="17" rx="2" fill="#fff" stroke="#0a6fd8" stroke-width="2"/><path d="M5 8h3M10 8h4M16 8h3M5 12h3M10 12h4M16 12h3M5 17h3M10 17h4M16 17h3" stroke="#0a6fd8" stroke-width="3"/></svg></button>
                            <button type="button" class="skin" aria-label="Skin"><svg viewBox="0 0 24 24"><path d="M7 2q5 4 10 0l6 5-3 4-2-1v12H6V10l-2 1-3-4z" fill="#6b6ff5"/></svg></button>
                            <button type="button" aria-label="Toolbox"><svg viewBox="0 0 24 24"><rect x="2" y="2" width="9" height="9" rx="2"/><rect x="15" y="3" width="6" height="7" rx="2" fill="none" stroke="#0a6fd8" stroke-width="3"/><rect x="2" y="13" width="9" height="9" rx="2"/><rect x="13" y="13" width="9" height="9" rx="2"/></svg></button>
                        </div>
                    </div>
                </div>

                <div class="toolbar display-toolbar">
                    <span class="grip"></span>
                    <button type="button" class="tool drop" aria-label="Panels"><svg><use href="#panelset"/></svg></button>
                    <span class="grip"></span>
                    <button type="button" class="tool" aria-label="Components"><svg><use href="#fcomp"/></svg></button>
                    <button type="button" class="tool" aria-label="Materials"><svg><use href="#fmat"/></svg></button>
                    <button type="button" class="tool" aria-label="Tables"><svg><use href="#ftab"/></svg></button>
                    <button type="button" class="tool" aria-label="Properties"><svg><use href="#fprop"/></svg></button>
                    <button type="button" class="tool" aria-label="Load collectors"><svg><use href="#fload"/></svg></button>
                    <button type="button" class="tool drop" aria-label="System collectors"><svg><use href="#fsys"/></svg></button>
                    <span class="sep wide"></span>
                    <button type="button" class="tool" aria-label="Delete"><svg><use href="#delete"/></svg></button>
                    <button type="button" class="tool" aria-label="Card edit"><svg><use href="#layers"/></svg></button>
                    <button type="button" class="tool" aria-label="Organize"><svg><use href="#move"/></svg></button>
                    <button type="button" class="tool" aria-label="Renumber"><svg><use href="#renum"/></svg></button>
                    <span class="grip"></span>
                    <div class="combo"><svg><use href="#shadeby"/></svg><select aria-label="Geometry color mode"><option>Auto</option></select><svg class="arrow"><use href="#down"/></svg></div>
                    <button type="button" class="tool drop" aria-label="Wireframe geometry"><svg><use href="#sheet"/></svg></button>
                    <button type="button" class="tool drop" aria-label="Shaded geometry"><svg><use href="#sheetfill"/></svg></button>
                    <button type="button" class="tool" aria-label="Transparency"><svg><use href="#cube"/></svg></button>
                    <span class="sep wide"></span>
                    <div class="combo combo-wide"><svg><use href="#cubeby"/></svg><select aria-label="Element color mode"><option>By Part</option></select><svg class="arrow"><use href="#down"/></svg></div>
                    <button type="button" class="tool drop white" aria-label="Wireframe elements"><svg><use href="#cubegrid"/></svg></button>
                    <button type="button" class="tool drop purple" aria-label="Shaded elements"><svg><use href="#cubegrid"/></svg></button>
                    <button type="button" class="tool drop" aria-label="1D elements"><svg><use href="#line"/></svg></button>
                    <button type="button" class="tool drop" aria-label="2D elements"><svg><use href="#flat"/></svg></button>
                    <button type="button" class="tool drop" aria-label="3D elements"><svg><use href="#slab2"/></svg></button>
                    <button type="button" class="tool" aria-label="Shrink"><svg><use href="#shrink"/></svg></button>
                    <button type="button" class="tool" aria-label="Visual options"><svg><use href="#monitor"/></svg></button>
                    <span class="grip"></span>
                    <button type="button" class="tool" aria-label="Favorites"><svg><use href="#star"/></svg></button>
                </div>

                <form class="panel">
                    <div class="modes">
                        <label><input type="radio" name="mode">trim with nodes</label>
                        <label><input type="radio" name="mode">trim with lines</label>
                        <label><input type="radio" name="mode" checked>trim with plane/surf</label>
                        <label><input type="radio" name="mode">merge</label>
                        <label><input type="radio" name="mode">detach</label>
                        <label><input type="radio" name="mode">boolean</label>
                    </div>
                    <div class="col plane">
                        <div class="caption">with plane:</div>
                        <div class="row">
                            <button type="button" class="btn arrow-btn" aria-label="Entity type"><svg viewBox="0 0 16 8"><path d="M0 0h16L8 8z"/></svg></button>
                            <button type="button" class="btn entity">solids</button>
                            <button type="button" class="btn reset" aria-label="Reset solids"><svg viewBox="0 0 16 15"><path d="M1 0h3v15H1zM14 0v15L6 7.500z"/></svg></button>
                        </div>
                        <div class="row empty"></div>
                        <div class="row">
                            <button type="button" class="btn arrow-btn" aria-label="Direction type"><svg viewBox="0 0 16 8"><path d="M0 0h16L8 8z"/></svg></button>
                            <button type="button" class="btn direction">z-axis</button>
                            <button type="button" class="btn base">B</button>
                            <button type="button" class="btn reset" aria-label="Reset direction"><svg viewBox="0 0 16 15"><path d="M1 0h3v15H1zM14 0v15L6 7.500z"/></svg></button>
                        </div>
                    </div>
                    <div class="col surfs">
                        <div class="caption">with surfs:</div>
                        <div class="row">
                            <button type="button" class="btn arrow-btn" aria-label="Entity type"><svg viewBox="0 0 16 8"><path d="M0 0h16L8 8z"/></svg></button>
                            <button type="button" class="btn entity">solids</button>
                            <button type="button" class="btn reset" aria-label="Reset solids"><svg viewBox="0 0 16 15"><path d="M1 0h3v15H1zM14 0v15L6 7.500z"/></svg></button>
                        </div>
                        <div class="row empty"></div>
                        <div class="row">
                            <span class="arrow-gap"></span>
                            <button type="button" class="btn entity focus">surfs</button>
                            <button type="button" class="btn reset" aria-label="Reset surfs"><svg viewBox="0 0 16 15"><path d="M1 0h3v15H1zM14 0v15L6 7.500z"/></svg></button>
                        </div>
                        <div class="row empty"></div>
                        <div class="row empty"></div>
                        <label class="row extend"><input type="checkbox" checked>extend trimm</label>
                    </div>
                    <div class="actions">
                        <button type="button" class="btn go">trim</button>
                        <button type="button" class="btn go">reject</button>
                        <button type="button" class="btn return">return</button>
                    </div>
                </form>
            </section>
        </main>

        <footer class="statusbar">
            <span class="ready">Ready</span>
            <span class="field"></span>
            <span class="field">除枝刀定刀-无孔版本</span>
            <span class="field"><i class="swatch yellow"></i>µ¹½Ç1</span>
            <span class="field"></span>
        </footer>
        <div class="watermark">CSDN @时风</div>
    </div>
</body>
</html>
```
FILE: styles.css
```css
* {
    box-sizing: border-box;
}

body {
    margin: 0;
    font-family: "Noto Sans", "Noto Sans CJK SC", sans-serif;
    font-size: 19px;
    color: #111;
    background-color: #f0f0f0;
}

button {
    margin: 0;
    padding: 0;
    border: none;
    background: none;
    font: inherit;
    color: inherit;
}

svg {
    display: block;
    flex: none;
}

.sprite {
    position: absolute;
    width: 0;
    height: 0;
}

.ax {
    font: bold 9px "Liberation Sans", sans-serif;
    fill: #444;
}

.abc {
    font: bold 10px "Liberation Sans", sans-serif;
    fill: #6b5a45;
}

.app {
    display: grid;
    grid-template-rows: auto auto auto minmax(0, 1fr) auto;
    height: 100vh;
    overflow: hidden;
    position: relative;
}

/* Title and menu */

.titlebar {
    display: flex;
    align-items: center;
    height: 34px;
    padding-left: 5px;
    background-color: #fff;
}

.logo {
    width: 18px;
    height: 20px;
    margin-right: 8px;
}

.title {
    margin: 0;
    font-size: 19px;
    font-weight: normal;
    flex: 1;
}

.loadbar {
    position: absolute;
    top: 0;
    left: 779px;
    width: 361px;
    height: 2px;
    background-color: #ddd;
}

.loadbar-fill {
    display: block;
    width: 20%;
    height: 2px;
    background-color: #0a6fd8;
}

.window-buttons {
    display: flex;
}

.window-buttons button {
    width: 70px;
    padding-left: 6px;
    display: flex;
    justify-content: center;
}

.window-buttons svg {
    width: 16px;
    height: 16px;
}

.menubar {
    display: flex;
    gap: 12px;
    height: 28px;
    padding-left: 7px;
    background-color: #fff;
    line-height: 28px;
}

.menubar a {
    color: #111;
    text-decoration: none;
}

/* Toolbars */

.toolbar {
    display: flex;
    align-items: center;
}

.main-toolbar {
    height: 44px;
    margin-left: -2px;
}

.tool {
    display: flex;
    align-items: center;
    flex: none;
    width: 28px;
    height: 28px;
    padding-left: 3px;
}

.tool svg {
    width: 22px;
    height: 22px;
}

.tool:disabled {
    opacity: .22;
}

.tool.drop {
    width: 38px;
}

.tool.drop::after {
    content: "";
    margin: 4px 0 0 4px;
    border: 3px solid transparent;
    border-top-color: #000;
    border-bottom: none;
}

.tool.white {
    fill: #fff;
}

.tool.purple {
    fill: #7377b5;
}

.faded svg {
    opacity: .6;
}

.grip {
    flex: none;
    width: 16px;
    height: 22px;
    background: repeating-linear-gradient(#333 0 2px, transparent 2px 6px) 9px 0 / 2px 100% no-repeat;
}

.sep {
    flex: none;
    width: 10px;
    height: 34px;
    background: linear-gradient(#888, #888) 4px 0 / 1px 100% no-repeat;
}

.sep.wide {
    width: 17px;
    height: 26px;
    background-position: 7px 0;
}

.pager {
    display: flex;
    align-items: center;
    margin: 0 34px 10px auto;
    font: 16px "Liberation Sans", sans-serif;
}

.pager button {
    width: 28px;
    opacity: .6;
}

.pager svg {
    width: 24px;
    height: 18px;
}

.pager input {
    width: 51px;
    height: 25px;
    margin-right: 2px;
    padding: 0 4px;
    border: 1px solid #a9b9c6;
    font: inherit;
    text-align: right;
}

/* Browser on the left */

.workspace {
    display: grid;
    grid-template-columns: 645fr 1270fr;
    min-height: 0;
}

.browser {
    display: flex;
    flex-direction: column;
    min-width: 0;
    padding: 0 3px 1px 2px;
    font: 15px "Liberation Mono", "Noto Sans CJK SC", monospace;
}

.tabs {
    display: flex;
    height: 20px;
}

.tab {
    display: flex;
    align-items: center;
    padding-top: 2px;
    border: solid #a9b9c6;
    border-width: 1px 0 1px 1px;
}

.tab-session {
    width: 81px;
}

.tab-mask {
    width: 54px;
}

.tab-model {
    width: 63px;
}

.tab.active {
    width: 54px;
    gap: 6px;
    border-right-width: 1px;
    border-bottom-color: #fff;
    background-color: #fff;
}

.tab svg {
    width: 8px;
    height: 8px;
}

.tab-rest {
    flex: 1;
    border-bottom: 1px solid #a9b9c6;
}

.browser-body {
    display: flex;
    flex-direction: column;
    flex: 1;
    min-height: 0;
    border: solid #a9b9c6;
    border-width: 0 1px 1px;
}

.view-row {
    display: flex;
    padding: 4px 0 8px;
}

.mini {
    display: flex;
    align-items: center;
    justify-content: center;
    width: 22px;
    height: 22px;
    border: 1px solid transparent;
}

.mini.on {
    border-color: #999;
    background-color: #ffc57e;
}

.mini svg {
    width: 14px;
    height: 14px;
    fill: none;
    stroke: #222;
}

.spacer {
    flex: 1;
}

.search-row {
    display: flex;
    align-items: center;
}

.search {
    display: flex;
    align-items: center;
    flex: 1;
    height: 25px;
    padding-right: 3px;
    border: 1px solid #a9b9c6;
    background-color: #fff;
}

.search input {
    flex: 1;
    padding: 0 4px;
    border: none;
    outline: none;
    font: 16px "Liberation Sans", sans-serif;
}

.search input::placeholder {
    color: #666;
}

.search svg {
    width: 12px;
    height: 12px;
}

.more {
    display: flex;
    justify-content: center;
    width: 15px;
}

.more svg {
    width: 8px;
    height: 8px;
}

.part-tools {
    display: flex;
    align-items: center;
    height: 41px;
    padding: 3px 0 0 2px;
}

.part-tools .tool {
    width: 30px;
}

.part-tools .tool svg {
    width: 24px;
    height: 24px;
}

.part-tools .tool.drop {
    width: 37px;
}

.part-tools .tool.drop::after {
    margin: 0 0 0 1px;
    border-width: 4px;
    border-bottom: none;
}

.tree-box {
    display: flex;
    flex-direction: column;
    flex: 1;
    min-height: 0;
    border: 1px solid #a9b9c6;
    background-color: #fff;
}

.tree {
    width: 100%;
    table-layout: fixed;
    border-collapse: separate;
    border-spacing: 0;
    line-height: 20px;
    white-space: nowrap;
}

.c-name {
    width: 268px;
}

.c-color {
    width: 35px;
}

.c-uid {
    width: 189px;
}

.c-rev {
    width: 90px;
}

.tree th {
    height: 23px;
    padding: 2px 0 0 2px;
    overflow: hidden;
    border-bottom: 1px solid #a9b9c6;
    border-right: 1px solid #a9b9c6;
    background-color: #f0f0f0;
    font-weight: normal;
    text-align: left;
}

.tree th:nth-child(2) {
    padding-left: 1px;
}

.tree th:last-child {
    border-right: none;
}

.tree td {
    height: 26px;
    padding: 2px 0 0 5px;
}

.tree td:first-child {
    padding: 0;
}

.tree td:nth-child(2) {
    padding: 0 0 0 2px;
}

.tree .rev {
    padding-right: 4px;
    text-align: right;
}

.wheel {
    display: block;
    width: 15px;
    height: 15px;
    border: 1px solid #888;
    border-radius: 50%;
    background: conic-gradient(#0f0, #0ff, #00f, #f0f, #f00, #ff0, #0f0);
}

.node {
    display: flex;
    align-items: center;
    height: 26px;
}

.node .ic {
    width: 19px;
    height: 17px;
}

.name {
    padding: 2px 0 0 6px;
}

.leaf {
    padding-left: 5px;
}

/* guide lines and the expand arrow of a tree row */
.slot {
    display: flex;
    align-items: center;
    justify-content: center;
    flex: none;
    width: 19px;
    height: 26px;
    background-color: #fff;
    background-repeat: no-repeat;
}

.slot.open::before {
    content: "";
    border: 3px solid transparent;
    border-top-color: #000;
    border-bottom: none;
}

.elbow {
    background-image: repeating-linear-gradient(#999 0 1px, transparent 1px 3px), repeating-linear-gradient(90deg, #999 0 1px, transparent 1px 3px);
    background-size: 1px 13px, 10px 1px;
    background-position: 9px 0, 9px 13px;
}

.tee {
    background-image: repeating-linear-gradient(#999 0 1px, transparent 1px 3px), repeating-linear-gradient(90deg, #999 0 1px, transparent 1px 3px);
    background-size: 1px 26px, 10px 1px;
    background-position: 9px 0, 9px 13px;
}

.pass {
    background-image: repeating-linear-gradient(#999 0 1px, transparent 1px 3px);
    background-size: 1px 26px;
    background-position: 9px 0;
}

.han {
    font-family: "Noto Sans CJK SC", sans-serif;
    font-size: 18px;
}

.name.han,
.tree td.han {
    padding-top: 0;
}

.current {
    font-weight: bold;
}

.current .han {
    font-size: 19px;
}

.selected td {
    background-color: #b3d5e9;
}

.swatch {
    display: block;
    width: 15px;
    height: 15px;
    border: 1px solid #000;
}

.blue {
    background-color: #00f;
}

.violet {
    background-color: #a37cff;
}

.yellow {
    background-color: #f4d775;
}

.red {
    background-color: #c82817;
}

.hscroll {
    display: flex;
    height: 16px;
    margin-top: auto;
    border-top: 1px solid #ccc;
}

.hscroll button {
    display: flex;
    align-items: center;
    justify-content: center;
    width: 16px;
    background-color: #f0f0f0;
}

.hscroll svg {
    width: 7px;
    height: 7px;
}

.track {
    flex: 1;
}

.thumb {
    display: block;
    width: 53%;
    height: 15px;
    border: 1px solid #a9b9c6;
    background-color: #f0f0f0;
}

.splitter {
    display: flex;
    justify-content: center;
    gap: 6px;
    height: 14px;
    padding-top: 3px;
    position: relative;
}

.splitter i {
    width: 2px;
    height: 2px;
    background-color: #777;
}

.splitter svg {
    position: absolute;
    right: 8px;
    top: 3px;
    width: 8px;
    height: 8px;
}

.props-box {
    height: 288px;
    border: 1px solid #a9b9c6;
    background-color: #fff;
}

.props {
    width: 100%;
    border-collapse: collapse;
}

.props th {
    height: 30px;
    padding: 3px 0 0 2px;
    border-bottom: 1px solid #ddd;
    background-color: #f0f0f0;
    font: 18px "Noto Sans", sans-serif;
    line-height: 24px;
    text-align: left;
}

.props th:first-child {
    width: 200px;
}

.props td {
    height: 27px;
    padding: 0 0 0 3px;
}

.props td:first-child {
    padding-left: 20px;
}

.style-ic {
    width: 14px;
    height: 13px;
}

/* Graphics area */

.stage {
    display: flex;
    flex-direction: column;
    min-width: 0;
    min-height: 0;
    border-left: 2px solid #111;
    border-bottom: 1px solid #f0f0f0;
}

.stage-top {
    display: flex;
    flex: 1;
    min-height: 0;
    padding-right: 7px;
}

.side-tools {
    display: flex;
    flex-direction: column;
    width: 43px;
    padding: 27px 0 0 5px;
}

.grip-h {
    width: 22px;
    height: 8px;
    margin-left: 8px;
    background: repeating-linear-gradient(90deg, #333 0 2px, transparent 2px 6px) 0 1px / 100% 2px no-repeat;
}

.side-tools button {
    display: flex;
    align-items: center;
    justify-content: center;
    width: 27px;
    height: 27px;
    margin-bottom: 1px;
}

.side-tools svg {
    width: 21px;
    height: 21px;
}

.side-tools .pressed {
    border: 1px solid #8a8a8a;
    background: linear-gradient(#f3efe9, #fbb060);
}

.side-tools .hover {
    background: linear-gradient(#fff8e6, #ffce92);
}

.tip-anchor {
    position: relative;
}

.tooltip {
    position: absolute;
    z-index: 2;
    top: 32px;
    left: 7px;
    padding: 5px 5px 4px 4px;
    border: 1px solid #000;
    background-color: #ffffe6;
    font: 16px/18px "Liberation Sans", sans-serif;
    white-space: nowrap;
}

.viewport {
    position: relative;
    flex: 1;
    min-width: 0;
    margin-top: 21px;
    border: 1px solid #0ff;
    background: linear-gradient(#2b557f 0%, #476889 22%, #6b8199 48%, #8a939b 75%, #a1a1a0 100%);
}

.scene {
    position: absolute;
    width: 100%;
    height: 100%;
}

.edges {
    fill: none;
    stroke: #0ef50e;
    stroke-width: 3;
}

.axis-label {
    font: 19px "Noto Sans", sans-serif;
    fill: #fff;
}

.model-info {
    position: absolute;
    top: 4px;
    right: 6px;
    color: #fff;
    font-size: 20px;
}

.ime {
    position: absolute;
    right: 49px;
    bottom: 68px;
    display: flex;
    align-items: center;
    height: 38px;
    padding-right: 1px;
    border: 1px solid #c3cde4;
    border-radius: 3px;
    background-color: #fff;
}

.ime-logo {
    width: 47px;
    height: 47px;
    margin: -6px 5px 0 -8px;
}

.ime button {
    display: flex;
    align-items: center;
    justify-content: center;
    width: 36px;
    height: 36px;
    color: #0a6fd8;
    fill: #0a6fd8;
}

.ime button svg {
    width: 24px;
    height: 24px;
}

.ime .ime-lang {
    font: bold 22px/32px "Noto Sans CJK SC", sans-serif;
}

.ime .skin {
    background: linear-gradient(45deg, #b9f6f4, #fff 50%, #fbeefb);
}

.display-toolbar {
    height: 40px;
    margin-bottom: 7px;
}

.combo {
    display: flex;
    align-items: center;
    flex: none;
    width: 132px;
    height: 30px;
    background-color: #fff;
}

.combo-wide {
    width: 142px;
}

.combo svg {
    width: 20px;
    height: 22px;
}

.combo select {
    flex: 1;
    min-width: 0;
    padding: 0 0 0 2px;
    border: none;
    background: none;
    appearance: none;
    font: 16px "Liberation Sans", sans-serif;
    color: #000;
}

.combo .arrow {
    width: 20px;
    height: 28px;
    padding: 0 5px;
    background-color: #f0f0f0;
}

/* Command panel */

.panel {
    display: flex;
    height: 236px;
    margin: 0 5px 0 2px;
    padding: 25px 18px 4px 10px;
    border-top: 2px solid #999;
    border-bottom: 2px solid #000;
    font-size: 20px;
    line-height: 24px;
    overflow: hidden;
}

.modes {
    width: 261px;
}

.modes label {
    display: flex;
    gap: 8px;
    height: 30px;
}

.modes input {
    width: 19px;
    height: 19px;
    margin: 5px 0 0;
    border: 1px solid #fff;
    border-top-color: #222;
    border-left-color: #222;
    border-radius: 50%;
    background-color: #fff;
    appearance: none;
}

.modes input:checked {
    background-image: radial-gradient(#000 4px, transparent 5px);
}

.plane {
    width: 288px;
}

.surfs {
    width: 256px;
    margin-left: 38px;
    padding-left: 15px;
    border-left: 1px solid #999;
}

.caption {
    height: 30px;
    padding-left: 1px;
}

.row {
    display: flex;
    height: 30px;
}

.btn {
    height: 30px;
    padding-bottom: 5px;
    border: 1px solid #fff;
    border-right: 2px solid #777;
    border-bottom: 2px solid #777;
    line-height: 22px;
}

.btn svg {
    display: block;
    width: 16px;
    height: 15px;
    margin: 5px auto 0;
}

.btn.arrow-btn svg {
    height: 8px;
}

.arrow-btn,
.arrow-gap,
.reset {
    flex: none;
    width: 35px;
}

.entity {
    flex: 1;
    padding-left: 4px;
    border-color: #f5f5a8 #9c9c3c #9c9c3c #f5f5a8;
    background-color: #e6e664;
}

.entity.focus {
    border: 2px solid #0ff;
    line-height: 20px;
}

.direction {
    flex: 1;
    padding-left: 4px;
}

.base {
    width: 54px;
    padding-left: 4px;
    border-color: #e08fe0 #7a2f7a #7a2f7a #e08fe0;
    background-color: #c060c0;
}

.extend {
    gap: 6px;
    padding-left: 41px;
}

.extend input {
    width: 22px;
    height: 22px;
    margin: 4px 0 0;
    border: 2px solid #fff;
    border-top-color: #777;
    border-left-color: #777;
    background-color: #fff;
    appearance: none;
}

.extend input:checked::before {
    content: "";
    display: block;
    width: 6px;
    height: 11px;
    margin: 1px auto;
    border: solid #000;
    border-width: 0 2px 2px 0;
    transform: rotate(45deg);
}

.actions {
    display: flex;
    flex-direction: column;
    width: 102px;
    margin-left: auto;
}

.go {
    padding-left: 3px;
    border-color: #8fe08f #1f7a2a #1f7a2a #8fe08f;
    background-color: #60c060;
}

.return {
    flex: none;
    margin-top: 120px;
    border: 2px solid #111;
    outline: 1px solid #c06060;
    background-color: #c05c5c;
}

/* Status bar */

.statusbar {
    display: grid;
    grid-template-columns: 1fr 139px 139px 160px 149px;
    gap: 2px;
    height: 28px;
    padding-top: 3px;
    border-bottom: 1px solid #ccc;
    font-size: 16px;
    line-height: 23px;
    white-space: nowrap;
}

.ready {
    padding-left: 4px;
    font-size: 15px;
}

.field {
    display: flex;
    align-items: center;
    gap: 4px;
    height: 23px;
    padding-left: 2px;
    border: solid #111;
    border-width: 1px 0 0 1px;
    overflow: hidden;
}

.field .swatch {
    flex: none;
    width: 13px;
    height: 13px;
    margin-left: 3px;
}

.watermark {
    position: absolute;
    right: 3px;
    bottom: 9px;
    color: rgba(225, 225, 225, .75);
    font-size: 37px;
    line-height: 48px;
    text-shadow: 1px 1px 1px #777;
}
```
